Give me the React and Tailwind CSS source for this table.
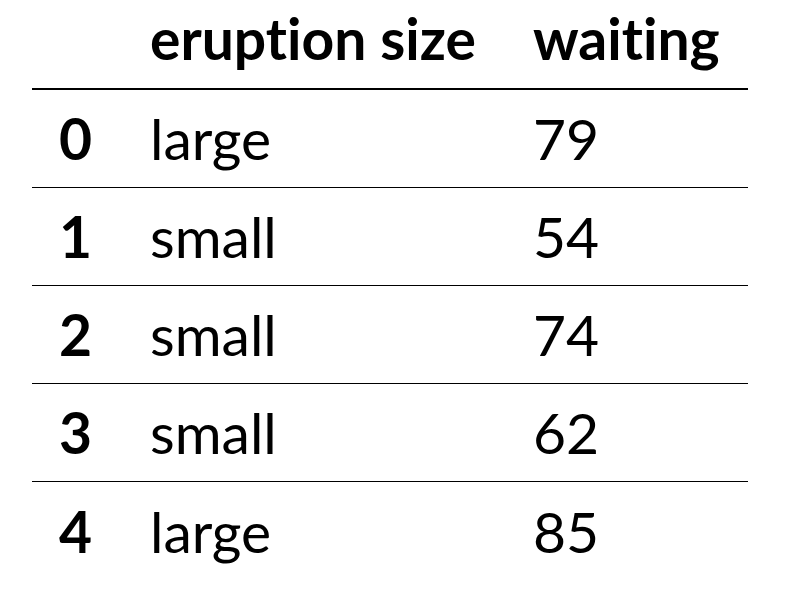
export default function App() {
  const rows = [
    ["0", "large", "79"],
    ["1", "small", "54"],
    ["2", "small", "74"],
    ["3", "small", "62"],
    ["4", "large", "85"],
  ];
  return (
    <div className="w-[802px] h-[604px] bg-white text-black pl-[32px] [font-variant-ligatures:none]" style={{ fontFamily: "Lato, sans-serif" }}>
      <div className="w-[716px]">
        <div className="flex h-[90px] border-b-2 border-black font-bold text-[57px] leading-none items-center pb-[12px]">
          <div className="w-[118px]"></div>
          <div className="w-[383px]">eruption size</div>
          <div className="w-[215px]">waiting</div>
        </div>
        {rows.map((r, i) => (
          <div
            key={r[0]}
            className={`flex h-[98px] items-center text-[57px] leading-none ${i < rows.length - 1 ? "border-b border-black" : ""}`}
          >
            <div className="w-[118px] text-right pr-[58px] font-bold">{r[0]}</div>
            <div className="w-[383px]">{r[1]}</div>
            <div className="w-[215px]">{r[2]}</div>
          </div>
        ))}
      </div>
    </div>
  );
}
